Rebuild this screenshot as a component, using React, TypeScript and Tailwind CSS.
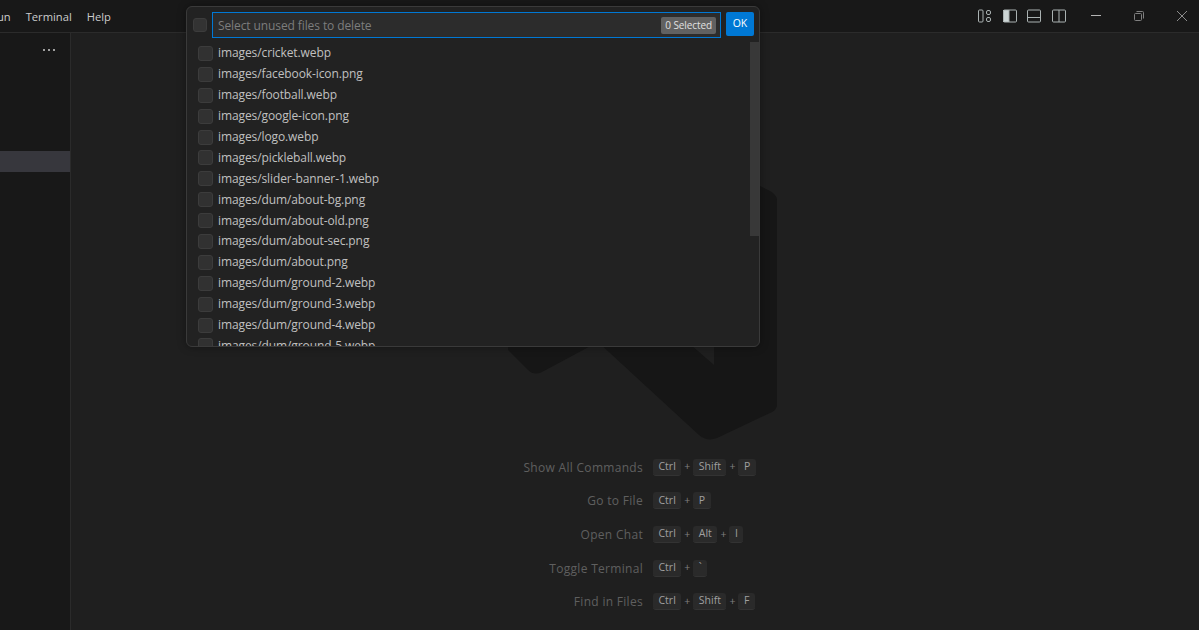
const files = [
  'images/cricket.webp',
  'images/facebook-icon.png',
  'images/football.webp',
  'images/google-icon.png',
  'images/logo.webp',
  'images/pickleball.webp',
  'images/slider-banner-1.webp',
  'images/dum/about-bg.png',
  'images/dum/about-old.png',
  'images/dum/about-sec.png',
  'images/dum/about.png',
  'images/dum/ground-2.webp',
  'images/dum/ground-3.webp',
  'images/dum/ground-4.webp',
  'images/dum/ground-5.webp',
]

const hints = [
  { label: 'Show All Commands', keys: ['Ctrl', 'Shift', 'P'] },
  { label: 'Go to File', keys: ['Ctrl', 'P'] },
  { label: 'Open Chat', keys: ['Ctrl', 'Alt', 'I'] },
  { label: 'Toggle Terminal', keys: ['Ctrl', '`'] },
  { label: 'Find in Files', keys: ['Ctrl', 'Shift', 'F'] },
]

function TitleIcons() {
  return (
    <div className="flex items-center gap-[8.7px] text-[#aab2b2]">
      <svg width="16" height="16" viewBox="0 0 16 16" fill="none" stroke="currentColor">
        <rect x="1.5" y="2" width="4.5" height="12" rx="1" />
        <rect x="9.5" y="2.5" width="4" height="4" rx="1.5" />
        <rect x="9.5" y="9.5" width="4" height="4" rx="1.5" />
      </svg>
      <svg width="16" height="16" viewBox="0 0 16 16" fill="none" stroke="currentColor">
        <rect x="1" y="2" width="6" height="12" fill="#cdd6d6" stroke="none" />
        <rect x="1.5" y="2" width="13" height="12" rx="1" />
        <path d="M7 2v12" />
      </svg>
      <svg width="16" height="16" viewBox="0 0 16 16" fill="none" stroke="currentColor">
        <rect x="1.5" y="2" width="13" height="12" rx="1" />
        <path d="M1.5 9.5h13" />
      </svg>
      <svg width="16" height="16" viewBox="0 0 16 16" fill="none" stroke="currentColor">
        <rect x="1.5" y="2" width="13" height="12" rx="1" />
        <path d="M8 2v12" />
      </svg>
    </div>
  )
}

function WindowButtons() {
  return (
    <div className="flex items-center pr-[11px]">
      <div className="w-[35px] flex justify-end text-[#b4b4b4]">
        <svg width="12" height="12" viewBox="0 0 12 12" stroke="currentColor"><path d="M1 5.5h10" /></svg>
      </div>
      <div className="w-[43px] flex justify-end">
        <svg width="12" height="12" viewBox="0 0 12 12" fill="none" stroke="#808080">
          <rect x="1.5" y="3.5" width="7" height="7" rx="1" />
          <path d="M3.5 1.5h6a1 1 0 0 1 1 1v6" />
        </svg>
      </div>
      <div className="w-[43px] flex justify-end text-[#8c8c8c]">
        <svg width="12" height="12" viewBox="0 0 12 12" stroke="currentColor"><path d="M1 1l10 10M11 1L1 11" /></svg>
      </div>
    </div>
  )
}

function Logo() {
  return (
    <svg viewBox="0 0 280 300" className="absolute left-[502px] top-[150px] w-[280px] h-[300px]" fill="#161616">
      <path
        fillRule="evenodd"
        d="M203 8 L268 41 Q275 45 275 50 L275 255 Q275 260 268 263 L215 288 Q205 292 197 285 L96 192 L40 222 Q32 226 26 220 L6 200 L6 100 L203 8 Z M212 90 L135 148 L212 215 Z"
      />
    </svg>
  )
}

export default function App() {
  return (
    <div className="relative w-[1199px] h-[630px] overflow-hidden flex flex-col bg-[#1f1f1f] text-[#cccccc] font-['Open_Sans',sans-serif]">
      {/* Title bar */}
      <div className="h-[33px] shrink-0 flex items-center justify-between bg-[#181818] border-b border-[#2b2b2b]">
        <div className="flex items-center gap-[15px] text-[11.2px] -ml-[10px] pt-[2px]">
          <span>Run</span>
          <span>Terminal</span>
          <span>Help</span>
        </div>
        <div className="flex items-center">
          <TitleIcons />
          <WindowButtons />
        </div>
      </div>

      <div className="flex flex-1 min-h-0">
        {/* Side bar */}
        <div className="w-[71px] shrink-0 bg-[#181818] border-r border-[#2b2b2b] flex flex-col">
          <div className="h-[33px] flex items-center justify-end pr-[14px] text-[#cccccc]">
            <svg width="14" height="4" viewBox="0 0 14 4" fill="currentColor">
              <circle cx="2" cy="2" r="1" />
              <circle cx="7" cy="2" r="1" />
              <circle cx="12" cy="2" r="1" />
            </svg>
          </div>
          <div className="mt-[85px] h-[21px] bg-[#37373d]" />
        </div>

        {/* Editor watermark */}
        <div className="relative flex-1 pl-[422px] pt-[422px]">
          <div className="relative z-10 grid grid-cols-[150px_auto] justify-start gap-x-[10px] gap-y-[9px] text-[12px]">
            {hints.map((hint) => (
              <div key={hint.label} className="contents">
                <div className="h-[24.6px] flex items-center justify-end pt-[1px] text-[#5f5f5f] tracking-[0.3px]">{hint.label}</div>
                <div className="h-[24.6px] flex items-center gap-[3px] text-[10.5px] text-[#a0a0a0]">
                  {hint.keys.map((key, i) => (
                    <div key={key} className="flex items-center gap-[3px]">
                      {i > 0 && <span className="text-[#808080]">+</span>}
                      <span className="h-[17px] px-[5.5px] flex items-center justify-center rounded-[3px] bg-[#2a2a2a] border-b border-[#333333]">
                        {key}
                      </span>
                    </div>
                  ))}
                </div>
              </div>
            ))}
          </div>
        </div>
      </div>

      <Logo />

      {/* Quick pick */}
      <div className="absolute left-[186px] top-[6px] w-[574px] h-[341px] rounded-[6px] bg-[#222222] border border-[#3a3a3a] shadow-[0_0_8px_rgba(0,0,0,0.36)] overflow-hidden">
        <div className="h-[36px] flex items-start pt-[5px] pl-[6px] pr-[5px]">
          <span className="mt-[6px] w-[14px] h-[14px] rounded-[3px] bg-[#333333] border border-[#3c3c3c]" />
          <div className="ml-[5px] w-[509px] h-[26px] flex items-center justify-between pt-[2px] pl-[5px] pr-[4px] bg-[#2c2c2c] border border-[#0078d4] text-[12px] tracking-[-0.1px] text-[#7d7d7d]">
            <span>Select unused files to delete</span>
            <span className="h-[17px] -mt-[2px] px-[4px] flex items-center rounded-[2px] bg-[#616161] text-[10px] tracking-[-0.1px] text-[#e0e0e0]">0 Selected</span>
          </div>
          <button className="ml-[5px] w-[28px] h-[24px] rounded-[2px] bg-[#0078d4] text-white text-[10.5px]">OK</button>
        </div>
        <div className="relative">
          <div className="absolute right-0 -top-px w-[9px] h-[194px] bg-[#383838]" />
          {files.map((file) => (
            <div key={file} className="h-[20.9px] flex items-center pl-[11px] text-[12px] tracking-[-0.1px]">
              <span className="w-[15px] h-[15px] rounded-[3px] bg-[#313131] border border-[#3c3c3c] shrink-0" />
              <span className="ml-[5px] text-[#c0c0c0]">{file}</span>
            </div>
          ))}
        </div>
      </div>
    </div>
  )
}
